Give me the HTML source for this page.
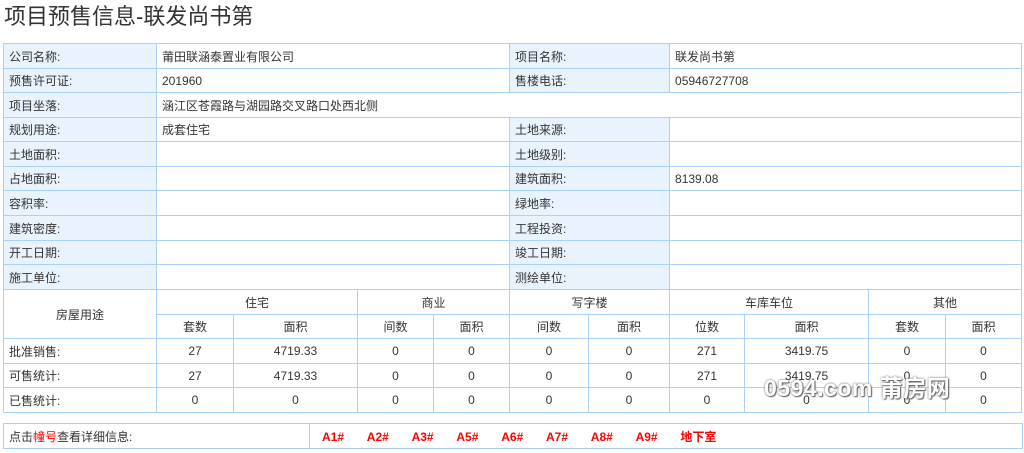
<!DOCTYPE html>
<html><head><meta charset="utf-8"><style>
body{margin:0;width:1024px;height:453px;background:#fff;font-family:"Liberation Sans","Noto Sans CJK SC",sans-serif;font-size:12px;color:#333;position:relative;overflow:hidden}
h1{position:absolute;left:4px;top:2px;margin:0;font-size:22px;font-weight:normal;color:#333;line-height:30px}
table{position:absolute;left:3px;border-collapse:collapse;table-layout:fixed}
td{border:1px solid #a8d2f8;padding:0 0 0 5px;white-space:nowrap;overflow:hidden}
td.l{background:#e8f3fe}
td.c{text-align:center;padding:0}
#t1{top:43px;width:1019px}
#t2{top:423px;width:1019px}
.r{color:#f00;font-weight:bold;display:inline-block;width:44.8px}
#wm{position:absolute;left:764px;top:369px;font-size:23px;font-weight:bold;color:#fff;text-shadow:0 0 2px #555,1px 1px 1px #666;letter-spacing:0.5px}
</style></head><body>
<h1>项目预售信息-联发尚书第</h1>
<table id="t1">
<colgroup><col style="width:153px"><col style="width:77px"><col style="width:124px"><col style="width:76px"><col style="width:76px"><col style="width:79px"><col style="width:81px"><col style="width:75px"><col style="width:124px"><col style="width:77px"><col style="width:76px"></colgroup>
<tr style="height:25px"><td class="l">公司名称:</td><td colspan="4">莆田联涵泰置业有限公司</td><td class="l" colspan="2">项目名称:</td><td colspan="4">联发尚书第</td></tr>
<tr style="height:24px"><td class="l">预售许可证:</td><td colspan="4">201960</td><td class="l" colspan="2">售楼电话:</td><td colspan="4">05946727708</td></tr>
<tr style="height:25px"><td class="l">项目坐落:</td><td colspan="10">涵江区苍霞路与湖园路交叉路口处西北侧</td></tr>
<tr style="height:24px"><td class="l">规划用途:</td><td colspan="4">成套住宅</td><td class="l" colspan="2">土地来源:</td><td colspan="4"></td></tr>
<tr style="height:25px"><td class="l">土地面积:</td><td colspan="4"></td><td class="l" colspan="2">土地级别:</td><td colspan="4"></td></tr>
<tr style="height:24px"><td class="l">占地面积:</td><td colspan="4"></td><td class="l" colspan="2">建筑面积:</td><td colspan="4">8139.08</td></tr>
<tr style="height:25px"><td class="l">容积率:</td><td colspan="4"></td><td class="l" colspan="2">绿地率:</td><td colspan="4"></td></tr>
<tr style="height:25px"><td class="l">建筑密度:</td><td colspan="4"></td><td class="l" colspan="2">工程投资:</td><td colspan="4"></td></tr>
<tr style="height:24px"><td class="l">开工日期:</td><td colspan="4"></td><td class="l" colspan="2">竣工日期:</td><td colspan="4"></td></tr>
<tr style="height:25px"><td class="l">施工单位:</td><td colspan="4"></td><td class="l" colspan="2">测绘单位:</td><td colspan="4"></td></tr>
<tr style="height:25px"><td class="c" rowspan="2">房屋用途</td><td class="c" colspan="2">住宅</td><td class="c" colspan="2">商业</td><td class="c" colspan="2">写字楼</td><td class="c" colspan="2">车库车位</td><td class="c" colspan="2">其他</td></tr>
<tr style="height:24px"><td class="c">套数</td><td class="c">面积</td><td class="c">间数</td><td class="c">面积</td><td class="c">间数</td><td class="c">面积</td><td class="c">位数</td><td class="c">面积</td><td class="c">套数</td><td class="c">面积</td></tr>
<tr style="height:25px"><td>批准销售:</td><td class="c">27</td><td class="c">4719.33</td><td class="c">0</td><td class="c">0</td><td class="c">0</td><td class="c">0</td><td class="c">271</td><td class="c">3419.75</td><td class="c">0</td><td class="c">0</td></tr>
<tr style="height:24px"><td>可售统计:</td><td class="c">27</td><td class="c">4719.33</td><td class="c">0</td><td class="c">0</td><td class="c">0</td><td class="c">0</td><td class="c">271</td><td class="c">3419.75</td><td class="c">0</td><td class="c">0</td></tr>
<tr style="height:25px"><td>已售统计:</td><td class="c">0</td><td class="c">0</td><td class="c">0</td><td class="c">0</td><td class="c">0</td><td class="c">0</td><td class="c">0</td><td class="c">0</td><td class="c">0</td><td class="c">0</td></tr>
</table>
<table id="t2">
<colgroup><col style="width:306px"><col style="width:713px"></colgroup>
<tr style="height:25px"><td>点击<span style="color:#f00">幢号</span>查看详细信息:</td><td style="padding-left:12px"><span class="r">A1#</span><span class="r">A2#</span><span class="r">A3#</span><span class="r">A5#</span><span class="r">A6#</span><span class="r">A7#</span><span class="r">A8#</span><span class="r">A9#</span><span class="r">地下室</span></td></tr>
</table>
<div id="wm">0594.com 莆房网</div>
</body></html>
